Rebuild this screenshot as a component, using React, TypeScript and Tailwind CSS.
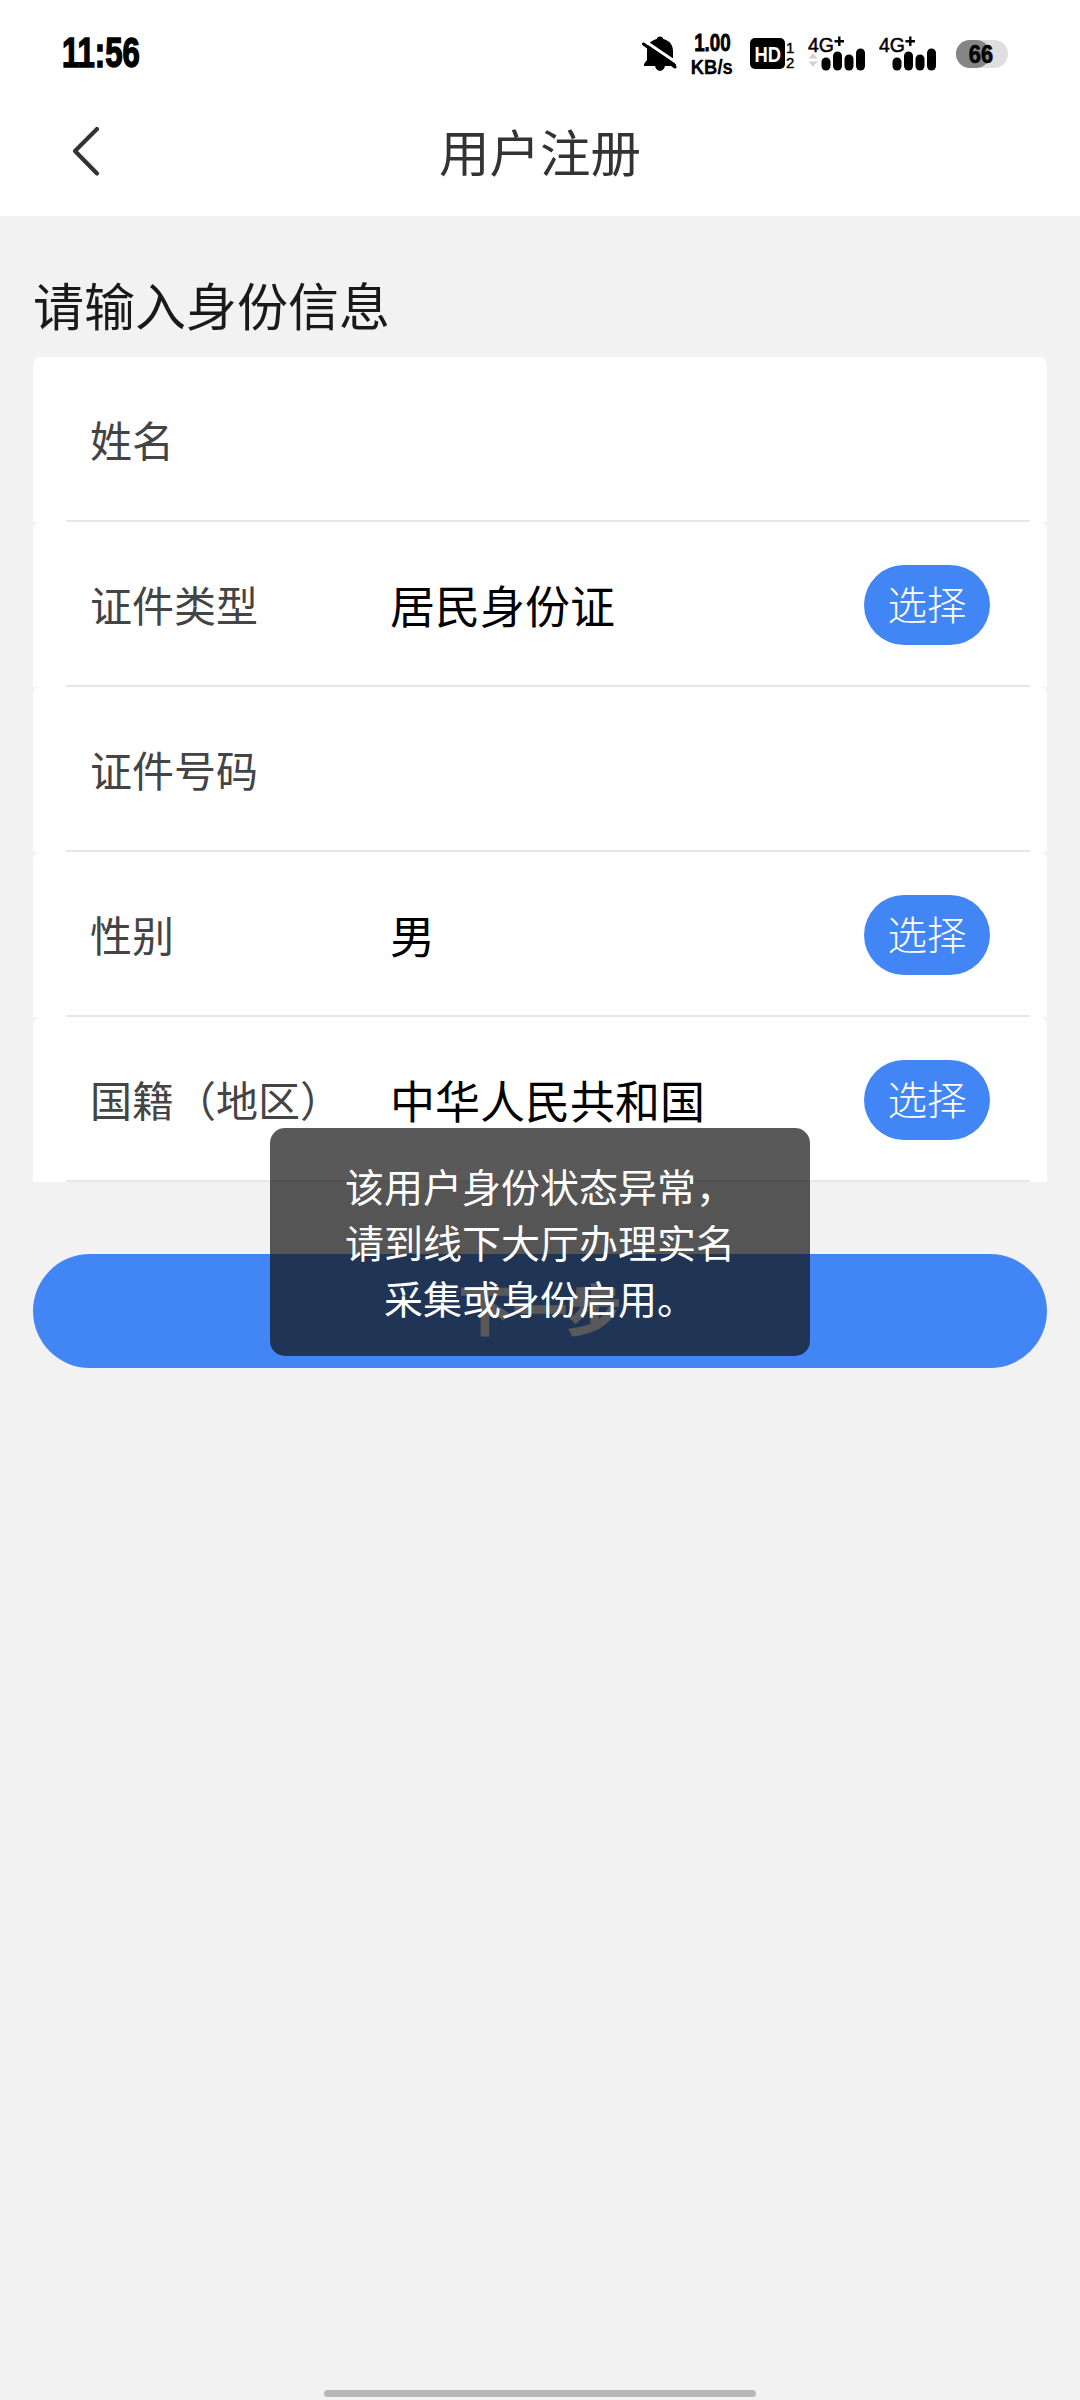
import { useState } from "react";

type Field = {
  label: string;
  value: string;
  selectable: boolean;
};

const fields: Field[] = [
  { label: "姓名", value: "", selectable: false },
  { label: "证件类型", value: "居民身份证", selectable: true },
  { label: "证件号码", value: "", selectable: false },
  { label: "性别", value: "男", selectable: true },
  { label: "国籍（地区）", value: "中华人民共和国", selectable: true },
];

// Signal bars with the network type above them
function Signal({ arrows = false }: { arrows?: boolean }) {
  return (
    <svg width="58" height="36" viewBox="0 0 58 36">
      <text x="0" y="16.500" fontSize="20" stroke="#000" strokeWidth="0.500" textLength="26" lengthAdjust="spacingAndGlyphs">4G</text>
      <path d="M26.500 6.300h9.500M31.300 1.500v9.500" stroke="#000" strokeWidth="2.400" />
      {arrows && <path d="M0.500 23.500 5 18l4.500 5.500zM0.500 26.500 5 32 9.500 26.500z" fill="#d2d2d2" />}
      <rect x="13.500" y="22.500" width="9" height="13" rx="4.500" />
      <rect x="25" y="16.500" width="9" height="19" rx="4.500" />
      <rect x="36.500" y="19.500" width="9" height="16" rx="4.500" />
      <rect x="48" y="13.500" width="9" height="22" rx="4.500" />
    </svg>
  );
}

function StatusBar() {
  return (
    <div className="flex h-[88px] items-start pl-[62px] font-['Liberation_Sans',sans-serif] text-black">
      <div className="mt-[29px] w-[580px]">
        <span className="block origin-left scale-x-[0.74] text-[42px] leading-[48px] font-bold [-webkit-text-stroke:1.500px_#000]">11:56</span>
      </div>

      {/* Muted bell */}
      <svg width="36" height="36" viewBox="0 0 36 36" className="mt-[36px]">
        <path d="M18 0.500c1.800 0 3 1.100 3.300 2.500C27.500 4.500 31 9 31 15v9l3 4.500V30H23c-.7 2.800-2.500 5-5 5s-4.300-2.200-5-5H2v-2l3-4V15c0-6 3.500-10.500 9.700-12C15 1.600 16.200.5 18 .5Z" />
        <path d="M2 4.500 36 27.500" stroke="#fff" strokeWidth="3" />
        <path d="M1.500 8 33 31" stroke="#000" strokeWidth="3" strokeLinecap="round" />
      </svg>

      <div className="mt-[30px] ml-[12px] flex w-[44px] flex-col items-center font-bold">
        <span className="scale-x-[0.78] text-[24px] leading-[26px] [-webkit-text-stroke:0.800px_#000]">1.00</span>
        <span className="scale-x-[0.92] text-[20px] leading-[22px] [-webkit-text-stroke:0.300px_#000]">KB/s</span>
      </div>

      {/* HD badge */}
      <svg width="46" height="36" viewBox="0 0 46 36" className="mt-[36px] ml-[16px]">
        <rect x="0" y="2" width="35" height="31" rx="5" />
        <text x="4.500" y="25.500" fontSize="22" fontWeight="700" fill="#fff" textLength="26.500" lengthAdjust="spacingAndGlyphs">HD</text>
        <text x="36" y="17" fontSize="15" stroke="#000" strokeWidth="0.400">1</text>
        <text x="36" y="31.500" fontSize="15" stroke="#000" strokeWidth="0.400">2</text>
      </svg>

      <div className="mt-[35px] ml-[12px] flex gap-[13px]">
        <Signal arrows />
        <Signal />
      </div>

      <div className="relative mt-[40px] ml-[19px] h-7 w-[52px] overflow-hidden rounded-full bg-[#dedede]">
        <div className="h-full w-[34px] rounded-r-full bg-[#858585]"></div>
        <span className="absolute inset-0 -left-[2px] scale-x-[0.84] text-center text-[26px] leading-[29px] font-bold [-webkit-text-stroke:0.600px_#000]">66</span>
      </div>
    </div>
  );
}

function FieldRow({ field }: { field: Field }) {
  return (
    <div className="flex h-[165px] flex-col rounded-t-lg bg-white">
      <div className="flex flex-1 items-center px-[57px] pt-[2px]">
        <span className="w-[300px] pb-[3px] text-[42px] whitespace-nowrap text-[#444]">{field.label}</span>
        <span className="flex-1 text-[45px] text-black">{field.value}</span>
        {field.selectable && (
          <button className="h-20 w-[126px] rounded-full bg-[#4286f5] text-[39.500px] leading-[74px] font-light text-white">
            <span className="relative -top-[2px]">选择</span>
          </button>
        )}
      </div>
      <div className="mr-[17px] ml-[33px] h-[2px] bg-[#e7e7e7]"></div>
    </div>
  );
}

export default function App() {
  const [toast] = useState(["该用户身份状态异常，", "请到线下大厅办理实名", "采集或身份启用。"]);

  return (
    <main className="relative flex h-[2400px] w-[1080px] flex-col overflow-hidden bg-[#f2f2f2] font-['Noto_Sans_CJK_SC',sans-serif]">
      {/* HEADER */}
      <header className="h-[216px] bg-white">
        <StatusBar />
        <div className="flex h-32 items-center">
          <svg width="30" height="52" viewBox="0 0 30 52" className="-mt-[2px] ml-[72px]" fill="none" stroke="#333" strokeWidth="4.200" strokeLinecap="round" strokeLinejoin="round">
            <path d="M25 4 3 26l22 22.500" />
          </svg>
          <h1 className="mr-[102px] flex-1 pb-[4px] text-center text-[50.500px] leading-[70px] text-[#333]">用户注册</h1>
        </div>
      </header>

      {/* FORM */}
      <section className="px-[33px]">
        <h2 className="h-[141px] pt-[53px] text-[51px] leading-[70px] text-[#1a1a1a]">请输入身份信息</h2>
        <div>
          {fields.map((field) => (
            <FieldRow key={field.label} field={field} />
          ))}
        </div>
        <button className="mt-[72px] h-[114px] w-full rounded-full bg-[#4286f5] pb-[6px] text-[54px] leading-[108px] font-bold text-white [-webkit-text-stroke:1.500px_#fff]">
          下一步
        </button>
      </section>

      {/* TOAST */}
      <div className="absolute top-[1128px] left-[270px] flex h-[228px] w-[540px] flex-col justify-center rounded-[15px] bg-[#131313]/70 pb-[3px] text-center text-[39px] leading-[56px] text-white">
        {toast.map((line) => (
          <p key={line}>{line}</p>
        ))}
      </div>

      <div className="mx-auto mt-auto mb-[3px] h-[7px] w-[432px] rounded-full bg-[#b8b8b8]"></div>
    </main>
  );
}
